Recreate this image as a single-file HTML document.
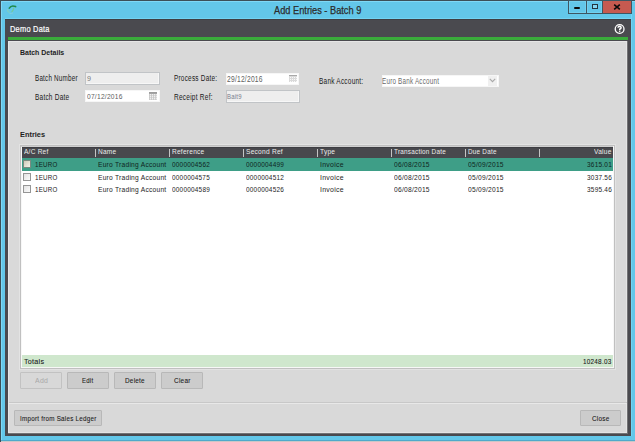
<!DOCTYPE html>
<html><head><meta charset="utf-8">
<style>
*{margin:0;padding:0;box-sizing:border-box}
html,body{width:635px;height:442px;overflow:hidden;background:#3c4f57}
body{position:relative;font-family:"Liberation Sans",sans-serif}
.a{position:absolute}
.t{position:absolute;white-space:nowrap;transform-origin:0 0}
.btn{position:absolute;border:1px solid #b8b8b8;background:#cccccc;border-radius:1px}
.sep{position:absolute;top:149px;width:1px;height:8px;background:#c4c4c4}
.cb{position:absolute;width:8px;height:8px;border:1px solid #959595;background:linear-gradient(135deg,#e2e2e2,#fbfbfb)}
</style></head><body>
<!-- window frame -->
<div class="a" style="left:1px;top:1px;width:634px;height:440px;background:#63c7e9"></div>
<div class="a" style="left:1px;top:1px;width:1px;height:440px;background:#7fd8f6"></div>
<div class="a" style="left:1px;top:1px;width:634px;height:1px;background:#7fd8f6"></div>
<div class="a" style="left:1px;top:441px;width:634px;height:1px;background:#cdc6c6"></div>
<!-- window buttons -->
<div class="a" style="left:568px;top:0;width:64px;height:14px;background:#3e5662"></div>
<div class="a" style="left:569px;top:1px;width:17px;height:12px;background:#63c7e9;box-shadow:inset 0 0 0 1px #72d0ef"></div>
<div class="a" style="left:587px;top:1px;width:15px;height:12px;background:#63c7e9;box-shadow:inset 0 0 0 1px #72d0ef"></div>
<div class="a" style="left:603px;top:1px;width:28px;height:12px;background:#c65a50"></div>
<div class="a" style="left:574px;top:7px;width:6px;height:2px;background:#0c0c0c;border-radius:1px"></div>
<div class="a" style="left:592px;top:4px;width:6px;height:5px;border:1px solid #24343c;background:#86d6ef"></div>
<svg class="a" style="left:613px;top:4px" width="8" height="6" viewBox="0 0 8 6"><path d="M1.2 0.6 L6.8 5.4 M6.8 0.6 L1.2 5.4" stroke="#0a0a0a" stroke-width="1.6"/></svg>
<!-- app icon -->
<svg class="a" style="left:5px;top:3px" width="14" height="13" viewBox="0 0 14 13">
<path d="M4.3 5.2 Q6.2 1.8 10.6 3.6" stroke="#1f8a4c" stroke-width="1.6" fill="none" stroke-linecap="round"/>
<path d="M8.6 4.6 Q8.8 7.2 6.6 9" stroke="#78c97c" stroke-width="1.3" fill="none" opacity=".75"/>
<path d="M2.6 6.2 Q2.2 8.6 4.6 9.6" stroke="#9dd89e" stroke-width="1.2" fill="none" opacity=".5"/>
<path d="M4.5 10.6 Q6.5 11 8 9.8" stroke="#a6d7d8" stroke-width="0.9" fill="none" opacity=".5"/>
</svg>
<!-- inner dark panel -->
<div class="a" style="left:5px;top:19px;width:626px;height:417px;background:#4a4a4f"></div>
<div class="a" style="left:631px;top:14px;width:1px;height:422px;background:#70d5f5"></div>
<div class="a" style="left:1px;top:440px;width:634px;height:1px;background:#4eaacb"></div>
<div class="a" style="left:5px;top:18px;width:626px;height:1px;background:#72d3f3"></div>
<div class="a" style="left:5px;top:19px;width:626px;height:1px;background:#3f3f43"></div>
<!-- help icon -->
<svg class="a" style="left:614px;top:23px" width="11" height="12" viewBox="0 0 11 12"><circle cx="5.6" cy="6.0" r="4.4" stroke="#fff" stroke-width="1.3" fill="none"/><path d="M4.0 4.7 Q4.1 3.3 5.7 3.3 Q7.2 3.4 7.1 4.6 Q7.0 5.5 5.8 6.1 L5.7 7.1" stroke="#fff" stroke-width="1.5" fill="none"/><circle cx="5.7" cy="8.3" r="0.75" fill="#fff"/></svg>
<!-- green bar -->
<div class="a" style="left:8px;top:37px;width:620px;height:3px;background:#3aab3b"></div>
<!-- content panel -->
<div class="a" style="left:8px;top:41px;width:619px;height:392px;background:#d9d9d9;box-shadow:inset 1px 1px 0 #e6e6e6,inset -1px -1px 0 #e4e4e4"></div>
<div class="a" style="left:627px;top:41px;width:1px;height:393px;background:#737375"></div>
<div class="a" style="left:8px;top:433px;width:620px;height:1px;background:#737375"></div>

<!-- inputs -->
<div class="a" style="left:85px;top:72px;width:75px;height:13px;border:1px solid #c1c4c7;background:#eeeeee;box-shadow:inset -1px -1px 0 #f7f7f7"></div>
<div class="a" style="left:85px;top:90px;width:75px;height:12px;border:1px solid #f6f6f6;background:#fff"></div>
<div class="a" style="left:226px;top:72.5px;width:73px;height:12.5px;border:1px solid #f6f6f6;background:#fff"></div>
<div class="a" style="left:226px;top:90px;width:74px;height:12.5px;border:1px solid #c1c4c7;background:#eeeeee;box-shadow:inset -1px -1px 0 #f7f7f7"></div>
<div class="a" style="left:382px;top:75px;width:117px;height:12px;border:1px solid #f6f6f6;background:#fff"></div>
<div class="a" style="left:488px;top:76px;width:9px;height:10px;background:#f0f0f0"></div>
<svg class="a" style="left:489px;top:78px" width="7" height="5" viewBox="0 0 7 5"><path d="M0.8 0.8 L3.5 3.6 L6.2 0.8" stroke="#a8a8a8" stroke-width="1.1" fill="none"/></svg>

<!-- calendar icons -->
<svg class="a" style="left:149px;top:92px" width="8" height="8" viewBox="0 0 8 8"><rect x="0" y="0" width="8" height="8" fill="#c4c4c4"/><rect x="0" y="0" width="8" height="1.8" fill="#9c9c9c"/><g fill="#fafafa"><rect x="0.8" y="2.2" width="1.3" height="1.2"/><rect x="2.9" y="2.2" width="1.3" height="1.2"/><rect x="5.0" y="2.2" width="1.3" height="1.2"/><rect x="7.1" y="2.2" width="0.9" height="1.2"/><rect x="0.8" y="4.2" width="1.3" height="1.2"/><rect x="2.9" y="4.2" width="1.3" height="1.2"/><rect x="5.0" y="4.2" width="1.3" height="1.2"/><rect x="7.1" y="4.2" width="0.9" height="1.2"/><rect x="0.8" y="6.2" width="1.3" height="1.2"/><rect x="2.9" y="6.2" width="1.3" height="1.2"/><rect x="5.0" y="6.2" width="1.3" height="1.2"/><rect x="7.1" y="6.2" width="0.9" height="1.2"/></g></svg>
<svg class="a" style="left:289px;top:75px" width="8" height="7" viewBox="0 0 8 7" shape-rendering="crispEdges"><rect x="0" y="0" width="8" height="7" fill="#dadada"/><rect x="0" y="0" width="8" height="1" fill="#a8a8a8"/><g fill="#f8f8f8"><rect x="1" y="2" width="1" height="1"/><rect x="3" y="2" width="1" height="1"/><rect x="5" y="2" width="1" height="1"/><rect x="7" y="2" width="1" height="1"/><rect x="1" y="4" width="1" height="1"/><rect x="3" y="4" width="1" height="1"/><rect x="5" y="4" width="1" height="1"/><rect x="7" y="4" width="1" height="1"/><rect x="1" y="6" width="1" height="1"/><rect x="3" y="6" width="1" height="1"/><rect x="5" y="6" width="1" height="1"/><rect x="7" y="6" width="1" height="1"/></g></svg>
<!-- grid -->
<div class="a" style="left:19px;top:144px;width:597px;height:226px;background:#e3e3e3"></div>
<div class="a" style="left:20px;top:145px;width:595px;height:224px;background:#c0c0c0"></div>
<div class="a" style="left:21px;top:146px;width:593px;height:222px;background:#f7f7f7"></div>
<div class="a" style="left:22px;top:147px;width:591px;height:220px;background:#ffffff"></div>
<div class="a" style="left:22px;top:147px;width:591px;height:11px;background:#48484d"></div>
<div class="a" style="left:21px;top:146px;width:592px;height:1px;background:#d0d0d0"></div>
<div class="a" style="left:22px;top:147px;width:591px;height:1px;background:#3e3e43"></div>
<div class="sep" style="left:95px"></div>
<div class="sep" style="left:169px"></div>
<div class="sep" style="left:243px"></div>
<div class="sep" style="left:317px"></div>
<div class="sep" style="left:391px"></div>
<div class="sep" style="left:465px"></div>
<div class="sep" style="left:539px"></div>
<div class="a" style="left:22px;top:158px;width:591px;height:12.7px;background:#3e9e87"></div>
<div class="cb" style="left:23px;top:160px;background:linear-gradient(135deg,#cfcab8,#f4f2ea);border-color:#7a8a80"></div>
<div class="cb" style="left:23px;top:172.5px"></div>
<div class="cb" style="left:23px;top:185px"></div>
<!-- totals -->
<div class="a" style="left:22px;top:355px;width:591px;height:12px;background:#cfe7cd"></div>
<!-- buttons -->
<div class="btn" style="left:20px;top:372px;width:42px;height:17px;background:#d8d8d8;border-color:#c2c2c2"></div>
<div class="btn" style="left:67px;top:372px;width:42px;height:17px"></div>
<div class="btn" style="left:114px;top:372px;width:42px;height:17px"></div>
<div class="btn" style="left:161px;top:372px;width:42px;height:17px"></div>
<!-- bottom separator -->
<div class="a" style="left:9px;top:402px;width:618px;height:1px;background:#c8c8c8"></div>
<div class="a" style="left:9px;top:403px;width:618px;height:1px;background:#e8e8e8"></div>
<div class="btn" style="left:14px;top:410px;width:88px;height:16px"></div>
<div class="btn" style="left:580px;top:410px;width:41px;height:16px"></div>
<div class="t" style="left:274.20px;top:5px;font-size:11px;line-height:11px;color:#2c2c2c;transform:scaleX(0.840);letter-spacing:0.0px;-webkit-text-stroke:0.25px #2c2c2c;">Add Entries - Batch 9</div>
<div class="t" style="left:9.61px;top:25px;font-size:9px;line-height:9px;color:#ffffff;transform:scaleX(0.823);letter-spacing:0.3px;-webkit-text-stroke:0.2px #ffffff;">Demo Data</div>
<div class="t" style="left:20.21px;top:49px;font-size:8px;line-height:8px;color:#1e1e1e;transform:scaleX(0.872);letter-spacing:0.0px;font-weight:bold;">Batch Details</div>
<div class="t" style="left:35.20px;top:74px;font-size:8.5px;line-height:8.5px;color:#1a1a1a;transform:scaleX(0.738);letter-spacing:0.3px;">Batch Number</div>
<div class="t" style="left:35.18px;top:93px;font-size:8.5px;line-height:8.5px;color:#1a1a1a;transform:scaleX(0.762);letter-spacing:0.3px;">Batch Date</div>
<div class="t" style="left:86.54px;top:75px;font-size:8px;line-height:8px;color:#7a7a7a;transform:scaleX(0.897);letter-spacing:0.3px;">9</div>
<div class="t" style="left:87.03px;top:93px;font-size:8px;line-height:8px;color:#606060;transform:scaleX(0.829);letter-spacing:0.3px;">07/12/2016</div>
<div class="t" style="left:173.89px;top:74px;font-size:8.5px;line-height:8.5px;color:#1a1a1a;transform:scaleX(0.755);letter-spacing:0.3px;">Process Date:</div>
<div class="t" style="left:173.88px;top:93px;font-size:8.5px;line-height:8.5px;color:#1a1a1a;transform:scaleX(0.769);letter-spacing:0.3px;">Receipt Ref:</div>
<div class="t" style="left:227.17px;top:75px;font-size:8.5px;line-height:8.5px;color:#606060;transform:scaleX(0.785);letter-spacing:0.3px;">29/12/2016</div>
<div class="t" style="left:226.52px;top:93px;font-size:8px;line-height:8px;color:#767c8c;transform:scaleX(0.745);letter-spacing:0.3px;">Bait9</div>
<div class="t" style="left:319.28px;top:77px;font-size:8.5px;line-height:8.5px;color:#1a1a1a;transform:scaleX(0.762);letter-spacing:0.3px;">Bank Account:</div>
<div class="t" style="left:382.30px;top:77px;font-size:8.5px;line-height:8.5px;color:#6a6a6a;transform:scaleX(0.739);letter-spacing:0.3px;">Euro Bank Account</div>
<div class="t" style="left:20.18px;top:131px;font-size:8px;line-height:8px;color:#1e1e1e;transform:scaleX(0.922);letter-spacing:0.0px;font-weight:bold;">Entries</div>
<div class="t" style="left:24.40px;top:148px;font-size:8px;line-height:8px;color:#ececec;transform:scaleX(0.814);letter-spacing:0.3px;">A/C Ref</div>
<div class="t" style="left:97.78px;top:148px;font-size:8px;line-height:8px;color:#ececec;transform:scaleX(0.818);letter-spacing:0.3px;">Name</div>
<div class="t" style="left:172.08px;top:148px;font-size:8px;line-height:8px;color:#ececec;transform:scaleX(0.819);letter-spacing:0.3px;">Reference</div>
<div class="t" style="left:246.17px;top:148px;font-size:8px;line-height:8px;color:#ececec;transform:scaleX(0.824);letter-spacing:0.3px;">Second Ref</div>
<div class="t" style="left:320.17px;top:148px;font-size:8px;line-height:8px;color:#ececec;transform:scaleX(0.822);letter-spacing:0.3px;">Type</div>
<div class="t" style="left:394.17px;top:148px;font-size:8px;line-height:8px;color:#ececec;transform:scaleX(0.795);letter-spacing:0.3px;">Transaction Date</div>
<div class="t" style="left:467.79px;top:148px;font-size:8px;line-height:8px;color:#ececec;transform:scaleX(0.794);letter-spacing:0.3px;">Due Date</div>
<div class="t" style="left:593.53px;top:148px;font-size:8px;line-height:8px;color:#ececec;transform:scaleX(0.824);letter-spacing:0.3px;">Value</div>
<div class="t" style="left:34.91px;top:161px;font-size:8px;line-height:8px;color:#0f241d;transform:scaleX(0.771);letter-spacing:0.3px;">1EURO</div>
<div class="t" style="left:97.97px;top:161px;font-size:8px;line-height:8px;color:#0f241d;transform:scaleX(0.830);letter-spacing:0.3px;">Euro Trading Account</div>
<div class="t" style="left:172.34px;top:161px;font-size:8px;line-height:8px;color:#0f241d;transform:scaleX(0.800);letter-spacing:0.3px;">0000004562</div>
<div class="t" style="left:246.24px;top:161px;font-size:8px;line-height:8px;color:#0f241d;transform:scaleX(0.802);letter-spacing:0.3px;">0000004499</div>
<div class="t" style="left:320.08px;top:161px;font-size:8px;line-height:8px;color:#0f241d;transform:scaleX(0.867);letter-spacing:0.3px;">Invoice</div>
<div class="t" style="left:394.03px;top:161px;font-size:8px;line-height:8px;color:#0f241d;transform:scaleX(0.832);letter-spacing:0.3px;">06/08/2015</div>
<div class="t" style="left:468.03px;top:161px;font-size:8px;line-height:8px;color:#0f241d;transform:scaleX(0.832);letter-spacing:0.3px;">05/09/2015</div>
<div class="t" style="left:587.24px;top:161px;font-size:8px;line-height:8px;color:#0f241d;transform:scaleX(0.807);letter-spacing:0.3px;">3615.01</div>
<div class="t" style="left:34.91px;top:174px;font-size:8px;line-height:8px;color:#1c1c1c;transform:scaleX(0.771);letter-spacing:0.3px;">1EURO</div>
<div class="t" style="left:97.97px;top:174px;font-size:8px;line-height:8px;color:#1c1c1c;transform:scaleX(0.830);letter-spacing:0.3px;">Euro Trading Account</div>
<div class="t" style="left:172.34px;top:174px;font-size:8px;line-height:8px;color:#1c1c1c;transform:scaleX(0.799);letter-spacing:0.3px;">0000004575</div>
<div class="t" style="left:246.24px;top:174px;font-size:8px;line-height:8px;color:#1c1c1c;transform:scaleX(0.802);letter-spacing:0.3px;">0000004512</div>
<div class="t" style="left:320.08px;top:174px;font-size:8px;line-height:8px;color:#1c1c1c;transform:scaleX(0.867);letter-spacing:0.3px;">Invoice</div>
<div class="t" style="left:394.03px;top:174px;font-size:8px;line-height:8px;color:#1c1c1c;transform:scaleX(0.832);letter-spacing:0.3px;">06/08/2015</div>
<div class="t" style="left:468.03px;top:174px;font-size:8px;line-height:8px;color:#1c1c1c;transform:scaleX(0.832);letter-spacing:0.3px;">05/09/2015</div>
<div class="t" style="left:587.24px;top:174px;font-size:8px;line-height:8px;color:#1c1c1c;transform:scaleX(0.807);letter-spacing:0.3px;">3037.56</div>
<div class="t" style="left:34.91px;top:186px;font-size:8px;line-height:8px;color:#1c1c1c;transform:scaleX(0.771);letter-spacing:0.3px;">1EURO</div>
<div class="t" style="left:97.97px;top:186px;font-size:8px;line-height:8px;color:#1c1c1c;transform:scaleX(0.830);letter-spacing:0.3px;">Euro Trading Account</div>
<div class="t" style="left:172.34px;top:186px;font-size:8px;line-height:8px;color:#1c1c1c;transform:scaleX(0.800);letter-spacing:0.3px;">0000004589</div>
<div class="t" style="left:246.24px;top:186px;font-size:8px;line-height:8px;color:#1c1c1c;transform:scaleX(0.802);letter-spacing:0.3px;">0000004526</div>
<div class="t" style="left:320.08px;top:186px;font-size:8px;line-height:8px;color:#1c1c1c;transform:scaleX(0.867);letter-spacing:0.3px;">Invoice</div>
<div class="t" style="left:394.03px;top:186px;font-size:8px;line-height:8px;color:#1c1c1c;transform:scaleX(0.832);letter-spacing:0.3px;">06/08/2015</div>
<div class="t" style="left:468.03px;top:186px;font-size:8px;line-height:8px;color:#1c1c1c;transform:scaleX(0.832);letter-spacing:0.3px;">05/09/2015</div>
<div class="t" style="left:587.24px;top:186px;font-size:8px;line-height:8px;color:#1c1c1c;transform:scaleX(0.807);letter-spacing:0.3px;">3595.46</div>
<div class="t" style="left:24.36px;top:357.5px;font-size:8px;line-height:8px;color:#1a1a1a;transform:scaleX(0.894);letter-spacing:0.3px;-webkit-text-stroke:0.1px #1a1a1a;">Totals</div>
<div class="t" style="left:583.09px;top:357.5px;font-size:8px;line-height:8px;color:#1a1a1a;transform:scaleX(0.795);letter-spacing:0.3px;-webkit-text-stroke:0.1px #1a1a1a;">10248.03</div>
<div class="t" style="left:34.60px;top:377px;font-size:8px;line-height:8px;color:#a8a8a8;transform:scaleX(0.866);letter-spacing:0.3px;">Add</div>
<div class="t" style="left:82.32px;top:377px;font-size:8px;line-height:8px;color:#1a1a1a;transform:scaleX(0.757);letter-spacing:0.3px;-webkit-text-stroke:0.1px #262626;">Edit</div>
<div class="t" style="left:124.79px;top:377px;font-size:8px;line-height:8px;color:#1a1a1a;transform:scaleX(0.797);letter-spacing:0.3px;-webkit-text-stroke:0.1px #262626;">Delete</div>
<div class="t" style="left:173.68px;top:377px;font-size:8px;line-height:8px;color:#1a1a1a;transform:scaleX(0.805);letter-spacing:0.3px;-webkit-text-stroke:0.1px #262626;">Clear</div>
<div class="t" style="left:19.63px;top:414.5px;font-size:8px;line-height:8px;color:#1a1a1a;transform:scaleX(0.785);letter-spacing:0.3px;-webkit-text-stroke:0.1px #262626;">Import from Sales Ledger</div>
<div class="t" style="left:592.18px;top:415px;font-size:8px;line-height:8px;color:#1a1a1a;transform:scaleX(0.800);letter-spacing:0.3px;-webkit-text-stroke:0.1px #262626;">Close</div>
</body></html>
